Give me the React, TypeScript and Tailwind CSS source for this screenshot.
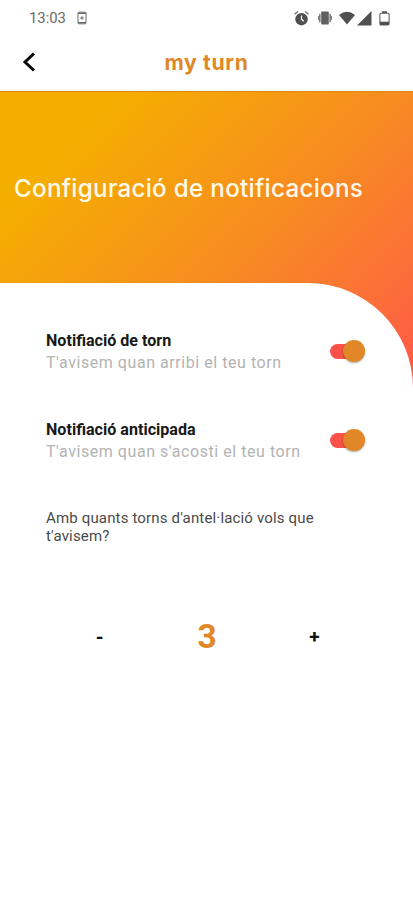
import type { ReactNode } from "react";

function StatusBar() {
  return (
    <div className="flex h-[37px] items-center justify-between pl-[29px] pr-[23px] text-[#6a6a6a]">
      <div className="flex items-center">
        <span className="w-[37px] whitespace-nowrap text-[14.8px] leading-none">13:03</span>
        <svg className="ml-[11px] h-[14px] w-[10px]" viewBox="0 0 10 14" fill="none" stroke="currentColor">
          <rect x="1" y="1.2" width="8" height="11.6" rx="1" strokeWidth="1" />
          <path d="M1 2.4h8M1 11.6h8" strokeWidth="1.2" />
          <path d="M5 5.2v3.6M3.2 7h3.6" strokeWidth="1.1" />
        </svg>
      </div>
      <div className="flex items-center pb-[1px]">
        <svg className="h-[16px] w-[16px]" viewBox="0 0 16 16" fill="none">
          <circle cx="8.5" cy="9.2" r="6.2" fill="#505050" />
          <path d="M1.5 4.2 4.9 1.4M15.5 4.2l-3.4-2.8" stroke="#707070" strokeWidth="1.3" />
          <path d="M8.5 5.6V9.3l2.2 2" stroke="#fff" strokeWidth="1.2" />
        </svg>
        <svg className="ml-[9px] h-[14px] w-[14px]" viewBox="0 0 14 14" fill="#606060">
          <rect x="3.2" y="0.5" width="7.6" height="13" rx="0.8" />
          <path d="M1.2 2.8h1.3v8.4H1.2zM11.5 2.8h1.3v8.4h-1.3zM0 5h.8v4H0zM13.2 5h.8v4h-.8z" />
        </svg>
        <svg className="ml-[7px] h-[14px] w-[16px]" viewBox="0 0 16 14" fill="#505050">
          <path d="M0 4Q8-2.4 16 4L8 13.5Z" />
        </svg>
        <svg className="ml-[2px] h-[15px] w-[15px]" viewBox="0 0 15 15" fill="#505050">
          <path d="M0 14.5 14.5 0v14.5Z" />
        </svg>
        <svg className="ml-[7px] h-[15px] w-[11px]" viewBox="0 0 11 15" fill="#505050">
          <rect x="3" y="0.3" width="5" height="2" />
          <rect x="0.9" y="2.2" width="9.2" height="11.8" rx="1.2" fill="none" stroke="#606060" strokeWidth="1.1" />
          <rect x="1" y="10.7" width="9" height="3.3" />
        </svg>
      </div>
    </div>
  );
}

function Toggle() {
  return (
    <button role="switch" aria-checked="true" className="flex h-[22px] w-[35px] items-center">
      <span className="block h-[15px] w-[28px] rounded-full bg-[#fa5248]" />
      <span className="-ml-[15px] block size-[22px] shrink-0 rounded-full bg-[#e18727] shadow-[0_1px_2px_rgba(0,0,0,0.35)]" />
    </button>
  );
}

function Setting({ title, children }: { title: string; children: ReactNode }) {
  return (
    <div className="flex h-[89px] items-start justify-between">
      <div className="whitespace-nowrap">
        <h2 className="text-[16.1px] leading-[22px] font-bold text-[#191919]">{title}</h2>
        {children}
      </div>
      <div className="pt-[10px]">
        <Toggle />
      </div>
    </div>
  );
}

export default function App() {
  return (
    <main className="flex h-[900px] w-[413px] flex-col overflow-hidden bg-white font-['Roboto',sans-serif]">
      <StatusBar />
      <header className="grid h-[54px] grid-cols-[1fr_auto_1fr] items-center pb-[5px]">
        <svg className="ml-[22px] h-[20px] w-[14px]" viewBox="0 0 14 20" fill="none" stroke="#080808" strokeWidth="3">
          <path d="M12 1.5 3 10l9 8.5" />
        </svg>
        <h1 className="whitespace-nowrap font-['Inter',sans-serif] text-[21.2px] leading-[26px] font-bold tracking-[0.65px] text-[#df8826]">my turn</h1>
      </header>
      <section className="flex grow flex-col bg-[linear-gradient(135deg,#f4ae00_0%,#f4ae00_17%,#f78d20_54%,#fb7037_79%,#ff5748_98%)] bg-[length:413px_315px] bg-no-repeat">
        <div className="flex h-[192px] items-center border-t border-[#df8211] pt-[3px] pl-[14px]">
          <h2 className="whitespace-nowrap font-['Inter',sans-serif] text-[24.2px] leading-[30px] font-medium tracking-[0.3px] text-[#fff9e8]">
            Configuració de notificacions
          </h2>
        </div>
        <div className="grow rounded-tr-[105px] bg-white pt-[47px] pr-[48px] pl-[46px]">
          <Setting title="Notifiació de torn">
            <p className="text-[16px] leading-[22px] tracking-[0.55px] text-[#b3b3b3]">T'avisem quan arribi el teu torn</p>
          </Setting>
          <Setting title="Notifiació anticipada">
            <p className="text-[16px] leading-[22px] tracking-[0.55px] text-[#b3b3b3]">T'avisem quan s'acosti el teu torn</p>
          </Setting>
          <p className="mt-[1px] whitespace-nowrap text-[15px] leading-[18px] tracking-[0.16px] text-[#4a4a4a]">
            Amb quants torns d'antel·lació vols que
            <br />
            t'avisem?
          </p>
          <div className="mt-[71px] -mr-[3px] grid grid-cols-3 items-center text-center">
            <button className="text-[20px] leading-[40px] font-bold text-[#111]">-</button>
            <span className="text-[33.5px] leading-[40px] font-bold text-[#e18727]">3</span>
            <button className="pt-[1px] text-[19px] leading-[40px] font-bold text-[#111]">+</button>
          </div>
        </div>
      </section>
    </main>
  );
}
